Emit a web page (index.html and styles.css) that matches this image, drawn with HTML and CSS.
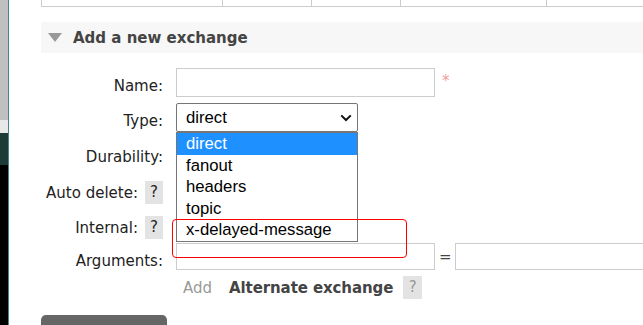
FILE: index.html
```html
<!DOCTYPE html>
<html>
<head>
  <title>Exchanges</title>
  <link rel="stylesheet" href="styles.css">
</head>
<body>
  <div class="side-strip">
    <div class="strip-gray"></div>
    <div class="strip-light"></div>
    <div class="strip-teal"></div>
    <div class="strip-black"></div>
  </div>

  <div class="main">
    <div class="table-stub">
      <div class="stub-cell cell-a"></div>
      <div class="stub-cell cell-b"></div>
      <div class="stub-cell cell-c"></div>
      <div class="stub-cell cell-d"></div>
      <div class="stub-cell cell-e"></div>
    </div>

    <div class="section-header">
      <span class="triangle"></span>
      <h2>Add a new exchange</h2>
    </div>

    <div class="form">
      <div class="form-row row-name">
        <label class="form-label label-low">Name:</label>
        <div class="text-input input-name"></div>
        <span class="mandatory">*</span>
      </div>

      <div class="form-row row-type">
        <label class="form-label label-low">Type:</label>
        <div class="select-wrap">
          <div class="select-box">
            <span>direct</span>
            <svg class="chevron" width="12" height="8" viewBox="0 0 12 8">
              <path d="M1.2 1.4 L6 6 L10.8 1.4" fill="none" stroke="#111" stroke-width="2"/>
            </svg>
          </div>
          <!-- open dropdown list -->
          <ul class="select-list">
            <li class="selected">direct</li>
            <li>fanout</li>
            <li>headers</li>
            <li>topic</li>
            <li>x-delayed-message</li>
          </ul>
        </div>
      </div>

      <div class="form-row row-durability">
        <label class="form-label">Durability:</label>
        <div class="hidden-field"></div>
      </div>

      <div class="form-row row-auto">
        <label class="form-label">Auto delete: <span class="help">?</span></label>
        <div class="hidden-field"></div>
      </div>

      <div class="form-row row-internal">
        <label class="form-label">Internal: <span class="help">?</span></label>
        <div class="hidden-field"></div>
      </div>

      <div class="form-row row-args">
        <label class="form-label label-low">Arguments:</label>
        <div class="text-input input-key"></div>
        <span class="equals">=</span>
        <div class="text-input input-value"></div>
      </div>

      <div class="form-row row-add">
        <div class="form-label"></div>
        <span class="add-link">Add</span>
        <span class="alt-exchange">Alternate exchange</span>
        <span class="help help-disabled">?</span>
      </div>
    </div>

    <div class="submit-btn"></div>

    <div class="highlight-box"></div>
  </div>
</body>
</html>
```

FILE: styles.css
```css
/* page layout */
body {
  margin: 0;
  display: flex;
  height: 325px;
  overflow: hidden;
  background-color: #fff;
  font-family: "DejaVu Sans", Verdana, sans-serif;
  font-size: 15px;
  color: #222;
}
.side-strip {
  width: 8px;
  display: flex;
  flex-direction: column;
  border-right: 1px solid #3f8c86;
}
.strip-gray {
  height: 120px;
  background-color: #c0c0c0;
}
.strip-light {
  height: 13px;
  background-color: #e8e8e8;
}
.strip-teal {
  height: 32px;
  background-color: #1f3b38;
}
.strip-black {
  flex: 1;
  background-color: #000;
}
.main {
  flex: 1;
  position: relative;
  padding-left: 32px;
}

/* top of the exchange table */
.table-stub {
  display: flex;
  height: 6px;
  border-bottom: 1px solid #ccc;
}
.stub-cell {
  border-left: 1px solid #ccc;
}
.cell-a { width: 180px; }
.cell-b { width: 88px; }
.cell-c { width: 88px; }
.cell-d { width: 145px; }
.cell-e { flex: 1; }

/* section header */
.section-header {
  margin-top: 15px;
  height: 31px;
  background-color: #f7f7f7;
  display: flex;
  align-items: center;
  padding-left: 7px;
}
.triangle {
  width: 0;
  height: 0;
  border-left: 7px solid transparent;
  border-right: 7px solid transparent;
  border-top: 9px solid #999;
  margin-right: 11px;
}
.section-header h2 {
  margin: 0;
  font-size: 15px;
  font-weight: bold;
  color: #444;
}

/* form */
.form {
  margin-top: 15px;
}
.form-row {
  display: flex;
  align-items: center;
}
.form-label {
  width: 122px;
  margin-right: 13px;
  text-align: right;
  white-space: nowrap;
  display: flex;
  align-items: center;
  justify-content: flex-end;
}
.label-low {
  align-self: flex-start;
  padding-top: 9px;
}
.row-name { height: 29px; margin-bottom: 6px; }
.row-type { height: 28px; margin-bottom: 12px; }
.row-durability { height: 28px; margin-bottom: 10px; }
.row-auto { height: 23px; margin-bottom: 12px; }
.row-internal { height: 23px; margin-bottom: 4px; }
.row-args { height: 27px; margin-bottom: 6px; }
.row-add { height: 23px; }

.text-input {
  box-sizing: border-box;
  border: 1px solid #ccc;
  background-color: #fff;
  height: 100%;
}
.input-name { width: 259px; }
.input-key { width: 259px; }
.input-value { flex: 1; border-right: none; }
.mandatory {
  color: #f59a9a;
  font-size: 15px;
  margin-left: 7px;
  align-self: flex-start;
  margin-top: 4px;
}
.equals {
  color: #444;
  padding: 0 3px 0 4px;
}

/* select with open list */
.select-wrap {
  position: relative;
  height: 100%;
}
.select-box {
  box-sizing: border-box;
  width: 182px;
  height: 29px;
  border: 1px solid #767676;
  border-radius: 2px;
  display: flex;
  align-items: center;
  justify-content: space-between;
  padding: 0 5px 0 9px;
  font-family: "Liberation Sans", Arial, sans-serif;
  font-size: 16.7px;
  color: #000;
}
.select-list {
  position: absolute;
  top: 29px;
  left: 0;
  width: 182px;
  box-sizing: border-box;
  margin: 0;
  padding: 0;
  list-style: none;
  border: 1px solid #767676;
  background-color: #fff;
  font-family: "Liberation Sans", Arial, sans-serif;
  font-size: 16.7px;
  color: #000;
  z-index: 2;
}
.select-list li {
  height: 21.6px;
  line-height: 21.6px;
  padding-left: 9px;
}
.select-list li.selected {
  background-color: #1e90ff;
  color: #fff;
}
.hidden-field {
  width: 120px;
  height: 100%;
}

/* help badges */
.help {
  display: inline-block;
  width: 18px;
  height: 23px;
  line-height: 23px;
  text-align: center;
  background-color: #e3e3e3;
  color: #222;
  margin-left: 7px;
}
.help-disabled {
  color: #999;
  width: 19px;
  margin-left: 10px;
}
.add-link {
  color: #999;
  margin-left: 7px;
}
.alt-exchange {
  font-weight: bold;
  color: #444;
  margin-left: 17px;
  letter-spacing: -0.1px;
}

.submit-btn {
  margin-top: 16px;
  width: 126px;
  height: 20px;
  background-color: #666;
  border-radius: 5px 5px 0 0;
}

/* red annotation round the last option */
.highlight-box {
  position: absolute;
  left: 163px;
  top: 219px;
  width: 233px;
  height: 37px;
  border: 1px solid #f00;
  border-radius: 4px;
  z-index: 3;
}
```
